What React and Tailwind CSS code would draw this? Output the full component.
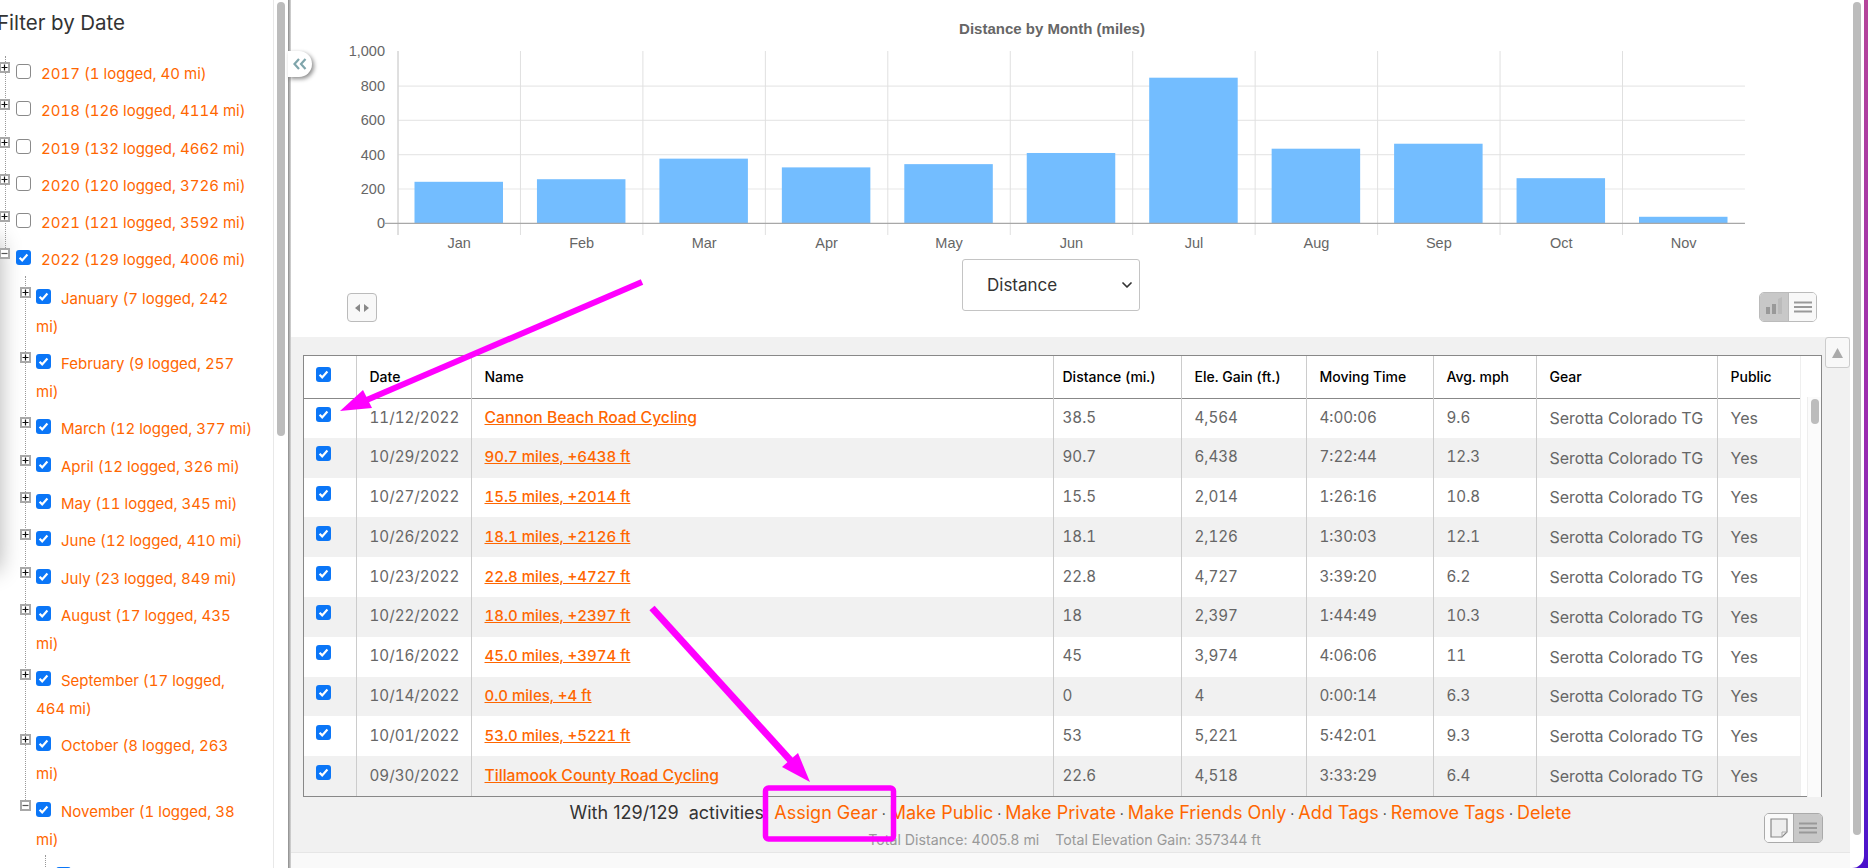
import { ChevronDown } from 'lucide-react';

const years = [
  { label: '2017 (1 logged, 40 mi)' },
  { label: '2018 (126 logged, 4114 mi)' },
  { label: '2019 (132 logged, 4662 mi)' },
  { label: '2020 (120 logged, 3726 mi)' },
  { label: '2021 (121 logged, 3592 mi)' },
];

const months = [
  'January (7 logged, 242 mi)',
  'February (9 logged, 257 mi)',
  'March (12 logged, 377 mi)',
  'April (12 logged, 326 mi)',
  'May (11 logged, 345 mi)',
  'June (12 logged, 410 mi)',
  'July (23 logged, 849 mi)',
  'August (17 logged, 435 mi)',
  'September (17 logged, 464 mi)',
  'October (8 logged, 263 mi)',
];

const chartData = [
  ['Jan', 242],
  ['Feb', 257],
  ['Mar', 377],
  ['Apr', 326],
  ['May', 345],
  ['Jun', 410],
  ['Jul', 849],
  ['Aug', 435],
  ['Sep', 464],
  ['Oct', 263],
  ['Nov', 38],
];

const activities = [
  ['11/12/2022', 'Cannon Beach Road Cycling', '38.5', '4,564', '4:00:06', '9.6'],
  ['10/29/2022', '90.7 miles, +6438 ft', '90.7', '6,438', '7:22:44', '12.3'],
  ['10/27/2022', '15.5 miles, +2014 ft', '15.5', '2,014', '1:26:16', '10.8'],
  ['10/26/2022', '18.1 miles, +2126 ft', '18.1', '2,126', '1:30:03', '12.1'],
  ['10/23/2022', '22.8 miles, +4727 ft', '22.8', '4,727', '3:39:20', '6.2'],
  ['10/22/2022', '18.0 miles, +2397 ft', '18', '2,397', '1:44:49', '10.3'],
  ['10/16/2022', '45.0 miles, +3974 ft', '45', '3,974', '4:06:06', '11'],
  ['10/14/2022', '0.0 miles, +4 ft', '0', '4', '0:00:14', '6.3'],
  ['10/01/2022', '53.0 miles, +5221 ft', '53', '5,221', '5:42:01', '9.3'],
  ['09/30/2022', 'Tillamook County Road Cycling', '22.6', '4,518', '3:33:29', '6.4'],
];

const bulkActions = ['Assign Gear', 'Make Public', 'Make Private', 'Make Friends Only', 'Add Tags', 'Remove Tags', 'Delete'];

function Check({ checked = true }) {
  if (!checked) {
    return <span className="inline-block w-[15px] h-[15px] rounded-[3px] border border-[#8a8a8a] bg-white" />;
  }
  return (
    <span className="inline-block w-[15px] h-[15px] rounded-[3px] bg-[#0b76f7]">
      <svg viewBox="0 0 15 15" className="block w-[15px] h-[15px]">
        <path d="M3.6 7.8 6.2 10.4 11.4 4.6" fill="none" stroke="#fff" strokeWidth="2.2" />
      </svg>
    </span>
  );
}

function Expander({ open = false, className }) {
  return (
    <span className={`absolute top-[2px] w-[11px] h-[11px] border-2 border-[#a8a8a8] bg-white ${className}`}>
      <svg viewBox="0 0 7 7" className="block w-[7px] h-[7px]">
        <path d={open ? 'M0.5 3.5H6.5' : 'M0.5 3.5H6.5M3.5 0.5V6.5'} stroke={open ? '#555' : '#111'} strokeWidth="1.2" />
      </svg>
    </span>
  );
}

function TreeRow({ label, open, checked = true, indent, expanderLeft }) {
  return (
    <li className={`relative pb-[9.3px] ${indent}`}>
      <Expander open={open} className={expanderLeft} />
      <Check checked={checked} />
      <a className="ml-[10px] text-[#ff6600]">{label}</a>
    </li>
  );
}

function Sidebar() {
  return (
    <div className="relative w-[273px] shrink-0 overflow-hidden bg-white text-[15px] leading-[28px] tabular-nums">
      <div className="absolute -left-[30px] top-[240px] h-[330px] w-[30px] shadow-[0_0_22px_rgba(0,0,0,0.3)]" />
      <div className="relative w-[254px]">
        <h3 className="-ml-[3px] pt-[10px] text-[20.5px] leading-[26px] text-[#333]">Filter by Date</h3>
        <ul className="relative mt-[24px]">
          <span className="absolute left-[5px] top-[-4px] h-[200px] border-l border-dotted border-[#999]" />
          {years.map((y) => (
            <TreeRow key={y.label} label={y.label} checked={false} indent="pl-[16px]" expanderLeft="-left-[1px]" />
          ))}
          <TreeRow label="2022 (129 logged, 4006 mi)" open indent="pl-[16px]" expanderLeft="-left-[1px]" />
          <li className="relative pt-[1px]">
            <span className="absolute left-[25px] top-[-8px] h-[532px] border-l border-dotted border-[#999]" />
            <ul>
              {months.map((m) => (
                <TreeRow key={m} label={m} indent="pl-[36px]" expanderLeft="left-[20px]" />
              ))}
              <TreeRow label="November (1 logged, 38 mi)" open indent="pl-[36px]" expanderLeft="left-[20px]" />
              <li className="relative pl-[56px]">
                <span className="absolute left-[45px] top-[-8px] h-[16px] w-[10px] border-l border-b border-dotted border-[#999]" />
                <Check />
              </li>
            </ul>
          </li>
        </ul>
      </div>
    </div>
  );
}

function Chart() {
  const left = 107;
  const step = 122.45;
  const zero = 223.3;
  const scale = 0.1715;
  return (
    <svg viewBox="0 0 1559 256" className="block w-[1559px] h-[256px]" style={{ fontFamily: '"Liberation Sans", sans-serif' }}>
      <text x="761" y="34" textAnchor="middle" fontSize="15" fontWeight="700" fill="#666">
        Distance by Month (miles)
      </text>
      {[200, 400, 600, 800].map((v) => (
        <line key={v} x1={left} x2={left + step * 11} y1={zero - v * scale} y2={zero - v * scale} stroke="#e8e8e8" strokeWidth="1.2" />
      ))}
      {chartData.map((d, i) => (
        <line key={d[0]} x1={left + step * i} x2={left + step * i} y1="51" y2="235" stroke="#e0e0e0" />
      ))}
      <line x1={left} x2={left} y1="51" y2="235" stroke="#d0d0d0" />
      {chartData.map(([name, value], i) => (
        <g key={name}>
          <rect x={left + step * i + 16.5} y={zero - value * scale} width="88.5" height={value * scale} fill="#73bdff" />
          <text x={left + step * i + step / 2} y="248" textAnchor="middle" fontSize="14.5" fill="#666">
            {name}
          </text>
        </g>
      ))}
      <line x1={left - 13} x2={left + step * 11} y1={zero} y2={zero} stroke="#a8a8a8" strokeWidth="1.2" />
      {['0', '200', '400', '600', '800', '1,000'].map((t, i) => (
        <text key={t} x="94" y={zero - i * 34.4 + 5} textAnchor="end" fontSize="14.5" fill="#666">
          {t}
        </text>
      ))}
    </svg>
  );
}

function HamburgerIcon() {
  return (
    <svg viewBox="0 0 18 12" className="block w-[18px] h-[12px]">
      <path d="M0 1.5H18M0 6H18M0 10.5H18" stroke="#999" strokeWidth="2.2" />
    </svg>
  );
}

function ChartControls() {
  return (
    <div className="flex items-start">
      <button className="ml-[56px] mt-[37px] flex h-[29px] w-[30px] items-center justify-center gap-[4px] rounded-[4px] border border-[#bbb] bg-[#f8f8f8]">
        <svg viewBox="0 0 5 8" className="h-[8px] w-[5px]"><path d="M5 0V8L0 4Z" fill="#888" /></svg>
        <svg viewBox="0 0 5 8" className="h-[8px] w-[5px]"><path d="M0 0V8L5 4Z" fill="#888" /></svg>
      </button>
      <div className="relative ml-[585px] mt-[3px] h-[52px] w-[178px]">
        <select className="h-full w-full appearance-none rounded-[3px] border border-[#c4c4c4] bg-white pl-[24px] pt-[2px] text-[17px] text-[#333] outline-none">
          <option>Distance</option>
        </select>
        <ChevronDown className="pointer-events-none absolute right-[5px] top-[18px] h-[16px] w-[16px] text-[#333]" strokeWidth={2.6} />
      </div>
      <div className="ml-auto mr-[33px] mt-[36px] flex h-[30px] w-[58px] overflow-hidden rounded-[5px] border border-[#bbb]">
        <span className="flex w-[29px] items-end justify-center border-r border-[#bbb] bg-[#c8c8c8] pb-[7px]">
          <svg viewBox="0 0 18 18" className="h-[18px] w-[18px]">
            <path d="M1 11H5V18H1ZM7 8H11V18H7Z" fill="#999" />
            <path d="M13 3 17 1V18H13Z" fill="#bbb" />
          </svg>
        </span>
        <span className="flex flex-1 items-center justify-center bg-[#f8f8f8]">
          <HamburgerIcon />
        </span>
      </div>
    </div>
  );
}

function ActivityTable() {
  const cell = 'px-[13px] border-l border-[#cccccc] text-left whitespace-nowrap overflow-hidden';
  const distCell = 'pl-[9px] pr-[4px] border-l border-[#cccccc] text-left whitespace-nowrap overflow-hidden';
  return (
    <div className="flex w-[1519px] h-[442px] shrink-0 border border-[#888] bg-white">
      <table className="w-[1496px] table-fixed border-collapse self-start text-[15.2px] tabular-nums text-[#666]">
        <colgroup>
          <col className="w-[52px]" />
          <col className="w-[115px]" />
          <col className="w-[582px]" />
          <col className="w-[128px]" />
          <col className="w-[125px]" />
          <col className="w-[127px]" />
          <col className="w-[103px]" />
          <col className="w-[181px]" />
          <col className="w-[83px]" />
        </colgroup>
        <thead>
          <tr className="h-[42px] border-b border-[#888] text-[14px] text-black">
            <th className="pl-[12px] text-left font-normal"><Check /></th>
            {['Date', 'Name', 'Distance (mi.)', 'Ele. Gain (ft.)', 'Moving Time', 'Avg. mph', 'Gear', 'Public'].map((h) => (
              <th key={h} className={`${h === 'Distance (mi.)' ? distCell : cell} font-medium`}>{h}</th>
            ))}
          </tr>
        </thead>
        <tbody>
          {activities.map((a, i) => (
            <tr key={a[0]} className={`h-[39.8px] ${i % 2 ? 'bg-[#f1f1f1]' : 'bg-white'}`}>
              <td className="pl-[12px]"><span className="relative -top-[1px]"><Check /></span></td>
              <td className={cell}>{a[0]}</td>
              <td className={cell}>
                <a className={`font-medium text-[#ff6600] underline ${a[1].includes('miles') ? 'text-[15px]' : 'text-[15.7px]'}`}>{a[1]}</a>
              </td>
              <td className={distCell}>{a[2]}</td>
              <td className={cell}>{a[3]}</td>
              <td className={cell}>{a[4]}</td>
              <td className={cell}>{a[5]}</td>
              <td className={`${cell} text-[16px]`}>Serotta Colorado TG</td>
              <td className={`${cell} text-[16px]`}>Yes</td>
            </tr>
          ))}
        </tbody>
      </table>
      <div className="flex-1 border-l border-[#efefef]">
        <div className="ml-[6px] mt-[41px] h-[400px] border-l border-[#eeeeee] bg-[#fbfbfb] pl-[3px] pt-[2px]">
          <div className="h-[25px] w-[8px] rounded-full bg-[#bcbcbc]" />
        </div>
      </div>
    </div>
  );
}

function Footer() {
  return (
    <div className="grid grid-cols-[1fr_auto_1fr] pt-[2px]">
      <div />
      <div className="text-center">
        <p className="text-[18px] leading-[27px] text-[#333]">
          With 129/129&nbsp; activities:{' '}
          {bulkActions.map((action, i) => (
            <span key={action}>
              <a className="text-[#ff6600]">{action}</a>
              {i < bulkActions.length - 1 && <span className="text-[14px]"> · </span>}
            </span>
          ))}
        </p>
        <p className="mt-[3px] -ml-[12px] text-[14.2px] leading-[20px] text-[#999]">
          Total Distance: 4005.8 mi &nbsp;&nbsp; Total Elevation Gain: 357344 ft
        </p>
      </div>
      <div className="flex justify-end pr-[27px] pt-[14px]">
        <div className="flex h-[30px] w-[59px] overflow-hidden rounded-[5px] border border-[#aaa]">
          <span className="flex w-[29px] items-center justify-center border-r border-[#aaa] bg-[#fafafa]">
            <svg viewBox="0 0 18 20" className="h-[20px] w-[18px]">
              <path d="M1 1H17V14L12 19H1Z" fill="#eee" stroke="#888" strokeWidth="1.2" />
              <path d="M12 19V14H17" fill="none" stroke="#aaa" />
            </svg>
          </span>
          <span className="flex flex-1 items-center justify-center bg-[#c8c8c8]">
            <HamburgerIcon />
          </span>
        </div>
      </div>
    </div>
  );
}

function Annotations() {
  return (
    <svg className="pointer-events-none absolute left-0 top-0 h-[868px] w-[1868px]" viewBox="0 0 1868 868">
      <line x1="642" y1="282" x2="362" y2="402" stroke="#ff00ff" strokeWidth="6" />
      <path d="M340 411 363 390 372 408Z" fill="#ff00ff" />
      <line x1="652" y1="608" x2="792" y2="762" stroke="#ff00ff" strokeWidth="7" />
      <path d="M810 782 798 753 782 767Z" fill="#ff00ff" />
      <rect x="765.5" y="788" width="128" height="51" rx="3" fill="none" stroke="#ff00ff" strokeWidth="5.5" />
    </svg>
  );
}

export default function App() {
  return (
    <div
      className="relative h-[868px] w-full overflow-hidden bg-gradient-to-b from-[#b5459a] via-[#9a2bb0] to-[#4a10cc]"
      style={{ fontFamily: 'Inter, sans-serif' }}
    >
      <div className="flex h-[868px] w-[1864px] overflow-hidden rounded-br-[12px] bg-white">
        <Sidebar />
        <div className="w-[15px] shrink-0 border-l border-[#e8e8e8] pl-[3px] pt-[2px]">
          <div className="h-[434px] w-[8px] rounded-full bg-[#bcbcbc]" />
        </div>
        <div className="w-[3px] shrink-0 bg-gradient-to-r from-[#8a8a8a] to-[#d8d8d8]" />
        <main className="relative w-[1559px] shrink-0">
          <button className="absolute -left-[3px] top-[51px] z-10 flex h-[26px] w-[24px] items-center justify-center rounded-r-[13px] bg-white text-[#7fa5ab] shadow-[2px_2px_4px_rgba(0,0,0,0.45)]">
            <svg viewBox="0 0 14 12" className="h-[12px] w-[14px]">
              <path d="M6 1 1.5 6 6 11M12.5 1 8 6 12.5 11" fill="none" stroke="currentColor" strokeWidth="2.2" />
            </svg>
          </button>
          <section className="h-[337px] bg-white">
            <Chart />
            <ChartControls />
          </section>
          <section className="h-[516px] border-b border-[#e6e6e6] bg-[#f1f1f1]">
            <div className="flex pl-[12px] pt-[18px]">
              <ActivityTable />
              <button className="-mt-[18px] ml-[3px] flex h-[31px] w-[25px] items-center justify-center rounded-[3px] border border-[#ccc] bg-[#f8f8f8]">
                <svg viewBox="0 0 11 10" className="h-[10px] w-[11px]"><path d="M5.5 0 11 10H0Z" fill="#aaa" /></svg>
              </button>
            </div>
            <Footer />
          </section>
          <div className="h-[15px] bg-[#f9f9f9]" />
        </main>
        <div className="flex-1 pl-[3px] pt-[2px]">
          <div className="h-[833px] w-[8px] rounded-full bg-[#bcbcbc]" />
        </div>
      </div>
      <Annotations />
    </div>
  );
}
